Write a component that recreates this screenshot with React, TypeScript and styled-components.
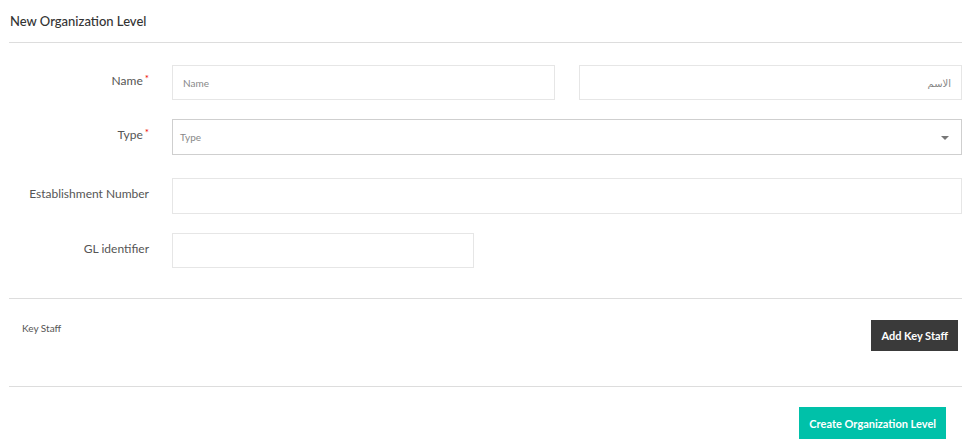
import React from 'react'
import styled, { createGlobalStyle } from 'styled-components'

const GlobalStyle = createGlobalStyle`
  html, body {
    margin: 0;
    padding: 0;
    background: #fff;
  }
  body {
    font-family: Lato, "Noto Sans", sans-serif;
    color: #555;
  }
  * {
    box-sizing: border-box;
  }
`

const Page = styled.div`
  width: 970px;
  padding: 0 8px 0 9px;
`

const Header = styled.div`
  height: 43px;
  padding: 13px 0 0 1px;
  border-bottom: 1px solid #ddd;
  font-size: 13px;
  font-weight: 500;
  color: #333;
`

const Form = styled.div`
  padding: 22px 0 30px;
  border-bottom: 1px solid #ddd;
`

const Row = styled.div<{ gap: number }>`
  display: grid;
  grid-template-columns: 140px 1fr;
  column-gap: 23px;
  margin-bottom: ${(p) => p.gap}px;
  &:last-child {
    margin-bottom: 0;
  }
`

const Label = styled.div`
  text-align: right;
  font-size: 12px;
  color: #555;
  padding-top: 8px;
  white-space: nowrap;
`

const Star = styled.span`
  color: #e00;
  font-size: 10px;
  margin-left: 2px;
  vertical-align: top;
  position: relative;
  top: -1px;
`

const Pair = styled.div`
  display: grid;
  grid-template-columns: 1fr 1fr;
  column-gap: 24px;
`

const Input = styled.input<{ w?: number; rtl?: boolean; h?: number }>`
  display: block;
  width: ${(p) => (p.w ? `${p.w}px` : '100%')};
  height: ${(p) => p.h ?? 35}px;
  border: 1px solid #e6e6e6;
  background: #fff;
  padding: 0 10px;
  font-family: Lato, "Noto Sans", "DejaVu Sans", sans-serif;
  font-size: 10px;
  color: #555;
  outline: none;
  direction: ${(p) => (p.rtl ? 'rtl' : 'ltr')};
  &::placeholder {
    color: #888;
  }
`

const Select = styled.div`
  position: relative;
  height: 36px;
  border: 1px solid #cfcfcf;
  display: flex;
  align-items: center;
  padding: 0 7px;
  font-size: 10px;
  color: #888;
`

const Caret = styled.span`
  position: absolute;
  right: 12px;
  top: 16px;
  width: 0;
  height: 0;
  border-left: 4px solid transparent;
  border-right: 4px solid transparent;
  border-top: 4px solid #777;
`

const StaffSection = styled.div`
  height: 88px;
  border-bottom: 1px solid #ddd;
  display: flex;
  justify-content: space-between;
  align-items: flex-start;
  padding: 21px 4px 0 13px;
`

const StaffTitle = styled.div`
  font-size: 10px;
  color: #555;
  padding-top: 2px;
`

const Button = styled.button<{ bg: string; h?: number }>`
  border: none;
  background: ${(p) => p.bg};
  color: #fff;
  font-family: Lato, "Noto Sans", sans-serif;
  font-size: 11px;
  font-weight: 700;
  padding: 0 10px;
  height: ${(p) => p.h ?? 31}px;
  cursor: pointer;
`

const Footer = styled.div`
  display: flex;
  justify-content: flex-end;
  padding: 20px 16px 0 0;
`

export default function App() {
  return (
    <>
      <GlobalStyle />
      <Page>
        <Header>New Organization Level</Header>
        <Form>
          <Row gap={19}>
            <Label>
              Name<Star>*</Star>
            </Label>
            <Pair>
              <Input placeholder="Name" />
              <Input rtl placeholder="الاسم" />
            </Pair>
          </Row>
          <Row gap={23}>
            <Label>
              Type<Star>*</Star>
            </Label>
            <Select>
              Type
              <Caret />
            </Select>
          </Row>
          <Row gap={19}>
            <Label>Establishment Number</Label>
            <Input h={36} />
          </Row>
          <Row gap={0}>
            <Label>GL identifier</Label>
            <Input w={302} />
          </Row>
        </Form>
        <StaffSection>
          <StaffTitle>Key Staff</StaffTitle>
          <Button bg="#3a3a3a">Add Key Staff</Button>
        </StaffSection>
        <Footer>
          <Button bg="#00c1a9" h={32}>
            Create Organization Level
          </Button>
        </Footer>
      </Page>
    </>
  )
}
